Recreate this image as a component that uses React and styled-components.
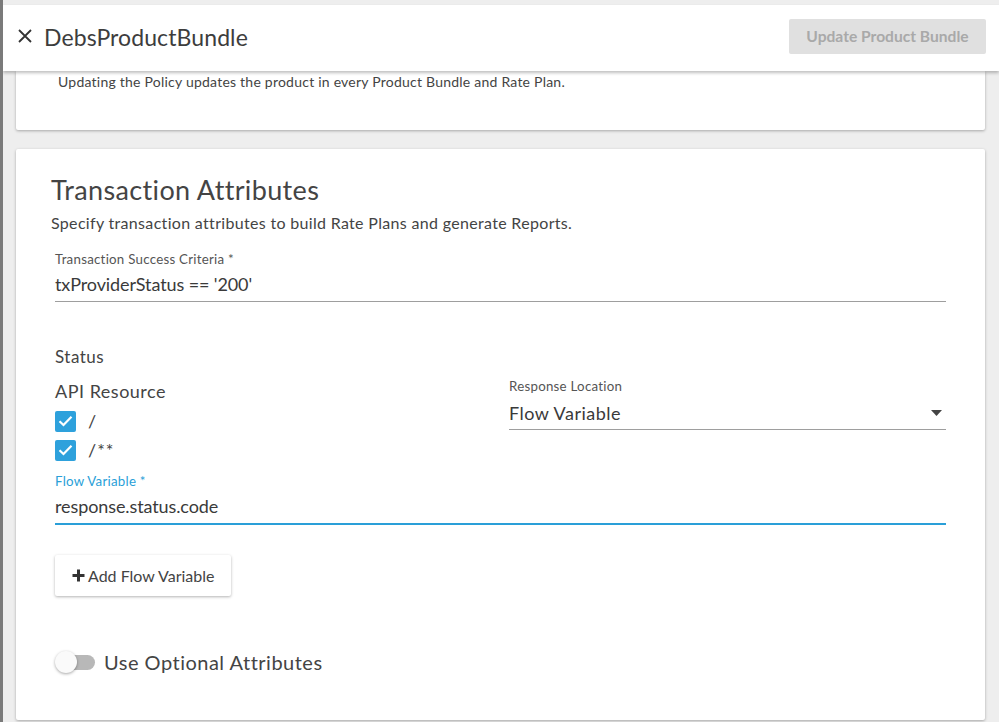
import React from "react";
import styled, { createGlobalStyle } from "styled-components";

const Global = createGlobalStyle`
  html, body { margin: 0; padding: 0; background: #eeeeee; }
  body { font-family: Lato, "Open Sans", sans-serif; color: #444; }
  * { box-sizing: border-box; }
`;

const Page = styled.div`
  position: relative;
  height: 722px;
  overflow: hidden;
  padding-top: 5px;
  border-left: 3px solid #7a7a7a;
  background: #eeeeee;
`;

const EdgeMark = styled.div`
  position: absolute;
  left: -3px;
  top: 35px;
  width: 3px;
  height: 12px;
  background: #111;
`;

const Header = styled.header`
  position: relative;
  z-index: 2;
  height: 66px;
  background: #fff;
  display: flex;
  align-items: center;
  justify-content: space-between;
  padding: 0 13px 0 14px;
  box-shadow: 0 2px 3px rgba(0, 0, 0, 0.25);
`;

const TitleWrap = styled.div`
  display: flex;
  align-items: center;
  gap: 11px;
`;

const Close = styled.button`
  border: 0;
  background: none;
  padding: 0;
  width: 16px;
  height: 16px;
  display: flex;
  align-items: center;
  justify-content: center;
  margin-top: -5px;
  cursor: pointer;
`;

const Title = styled.h1`
  margin: 0;
  font-size: 23px;
  font-weight: 400;
  color: #3d3d3d;
  letter-spacing: 0.1px;
  margin-top: -2px;
`;

const PrimaryButton = styled.button`
  border: 0;
  border-radius: 2px;
  background: #e0e0e0;
  color: #a9a9a9;
  font-family: Lato, sans-serif;
  font-size: 15.6px;
  font-weight: 700;
  height: 35px;
  width: 197px;
  margin-top: -4px;
`;

const Content = styled.div`
  display: flex;
  flex-direction: column;
  gap: 19px;
  padding: 0 14px 0 13px;
`;

const Card = styled.section`
  background: #fff;
  box-shadow: 0 1px 3px rgba(0, 0, 0, 0.3);
  border-radius: 2px;
`;

const NoticeCard = styled(Card)`
  height: 59px;
  padding: 2px 42px 0;
  border-radius: 0 0 2px 2px;
`;

const Notice = styled.p`
  margin: 0;
  font-size: 14px;
  letter-spacing: 0.23px;
  color: #444;
`;

const MainCard = styled(Card)`
  height: 571px;
  padding: 25px 39px 0 35px;
`;

const CardTitle = styled.h2`
  margin: 0;
  font-size: 27px;
  font-weight: 400;
  color: #444;
  letter-spacing: 0.35px;
  line-height: 32px;
`;

const CardSub = styled.p`
  margin: 7px 0 0;
  font-size: 16px;
  letter-spacing: 0.32px;
  color: #444;
`;

const Form = styled.div`
  padding-left: 4px;
`;

const Field = styled.div`
  margin-top: ${(p) => p.mt || 0}px;
`;

const Label = styled.div`
  font-size: 13.3px;
  letter-spacing: 0.25px;
  color: ${(p) => (p.active ? "#2a9fd8" : "#555")};
  line-height: 16px;
`;

const Value = styled.div`
  font-size: 18px;
  color: #3a3a3a;
  line-height: 24px;
  padding: 5px 0 5px;
  border-bottom: ${(p) => (p.active ? "2px solid #2a9fd8" : "1px solid #9e9e9e")};
  letter-spacing: -0.1px;
`;

const SelectValue = styled(Value)`
  display: flex;
  justify-content: space-between;
  align-items: center;
  padding: 7px 4px 4px 0;
  letter-spacing: 0.5px;
`;

const SectionLabel = styled.div`
  font-size: ${(p) => p.size}px;
  color: #444;
  letter-spacing: 0.5px;
  line-height: 22px;
`;

const Columns = styled.div`
  display: grid;
  grid-template-columns: 454px 1fr;
  margin-top: 12px;
`;

const CheckList = styled.div`
  display: flex;
  flex-direction: column;
  gap: 7px;
  margin-top: 8px;
`;

const CheckRow = styled.label`
  display: flex;
  align-items: center;
  gap: 12px;
  font-size: 18px;
  color: #444;
  letter-spacing: 1px;
`;

const Box = styled.span`
  flex-shrink: 0;
  width: 21px;
  height: 21px;
  border-radius: 2px;
  background: #2ea1dc;
  display: flex;
  align-items: center;
  justify-content: center;
`;

const AddButton = styled.button`
  margin-top: 30px;
  height: 41px;
  padding: 0 17px;
  border: 0;
  border-radius: 2px;
  background: #fff;
  box-shadow: 0 1px 3px rgba(0, 0, 0, 0.3);
  font-family: Lato, sans-serif;
  font-size: 16px;
  color: #444;
  display: flex;
  align-items: center;
  gap: 3px;
`;

const ToggleRow = styled.div`
  display: flex;
  align-items: center;
  gap: 9px;
  margin-top: 54px;
`;

const Track = styled.span`
  position: relative;
  width: 40px;
  height: 22px;
  display: inline-block;
  &::before {
    content: "";
    position: absolute;
    left: 6px;
    top: 4px;
    width: 34px;
    height: 15px;
    border-radius: 8px;
    background: #b8b8b8;
  }
  &::after {
    content: "";
    position: absolute;
    left: 0;
    top: 0;
    width: 22px;
    height: 22px;
    border-radius: 50%;
    background: #fafafa;
    box-shadow: 0 1px 3px rgba(0, 0, 0, 0.35);
  }
`;

const ToggleLabel = styled.span`
  font-size: 20px;
  color: #444;
  letter-spacing: 0.5px;
`;

const Check = () => (
  <Box>
    <svg width="15" height="12" viewBox="0 0 15 12">
      <path d="M1.5 6.2 L5.5 10 L13.5 1.8" fill="none" stroke="#fff" strokeWidth="2.2" />
    </svg>
  </Box>
);

export default function App() {
  return (
    <Page>
      <Global />
      <EdgeMark />
      <Header>
        <TitleWrap>
          <Close aria-label="close">
            <svg width="14" height="14" viewBox="0 0 14 14">
              <path d="M1 1 L13 13 M13 1 L1 13" stroke="#333" strokeWidth="1.8" />
            </svg>
          </Close>
          <Title>DebsProductBundle</Title>
        </TitleWrap>
        <PrimaryButton disabled>Update Product Bundle</PrimaryButton>
      </Header>
      <Content>
        <NoticeCard>
          <Notice>Updating the Policy updates the product in every Product Bundle and Rate Plan.</Notice>
        </NoticeCard>
        <MainCard>
          <CardTitle>Transaction Attributes</CardTitle>
          <CardSub>Specify transaction attributes to build Rate Plans and generate Reports.</CardSub>
          <Form>
            <Field mt={19}>
              <Label>Transaction Success Criteria *</Label>
              <Value>txProviderStatus == '200'</Value>
            </Field>
            <Field mt={44}>
              <SectionLabel size={17}>Status</SectionLabel>
            </Field>
            <Columns>
              <div>
                <SectionLabel size={18}>API Resource</SectionLabel>
                <CheckList>
                  <CheckRow><Check />/</CheckRow>
                  <CheckRow><Check />/**</CheckRow>
                </CheckList>
              </div>
              <Field mt={-2}>
                <Label>Response Location</Label>
                <SelectValue>
                  Flow Variable
                  <svg width="11" height="6" viewBox="0 0 11 6">
                    <path d="M0 0 L11 0 L5.5 6 Z" fill="#444" />
                  </svg>
                </SelectValue>
              </Field>
            </Columns>
            <Field mt={12}>
              <Label active>Flow Variable *</Label>
              <Value active>response.status.code</Value>
            </Field>
            <AddButton>
              <svg width="13" height="13" viewBox="0 0 13 13">
                <path d="M6.5 0.5 V12.5 M0.5 6.5 H12.5" stroke="#333" strokeWidth="3" />
              </svg>
              Add Flow Variable
            </AddButton>
            <ToggleRow>
              <Track />
              <ToggleLabel>Use Optional Attributes</ToggleLabel>
            </ToggleRow>
          </Form>
        </MainCard>
      </Content>
    </Page>
  );
}
